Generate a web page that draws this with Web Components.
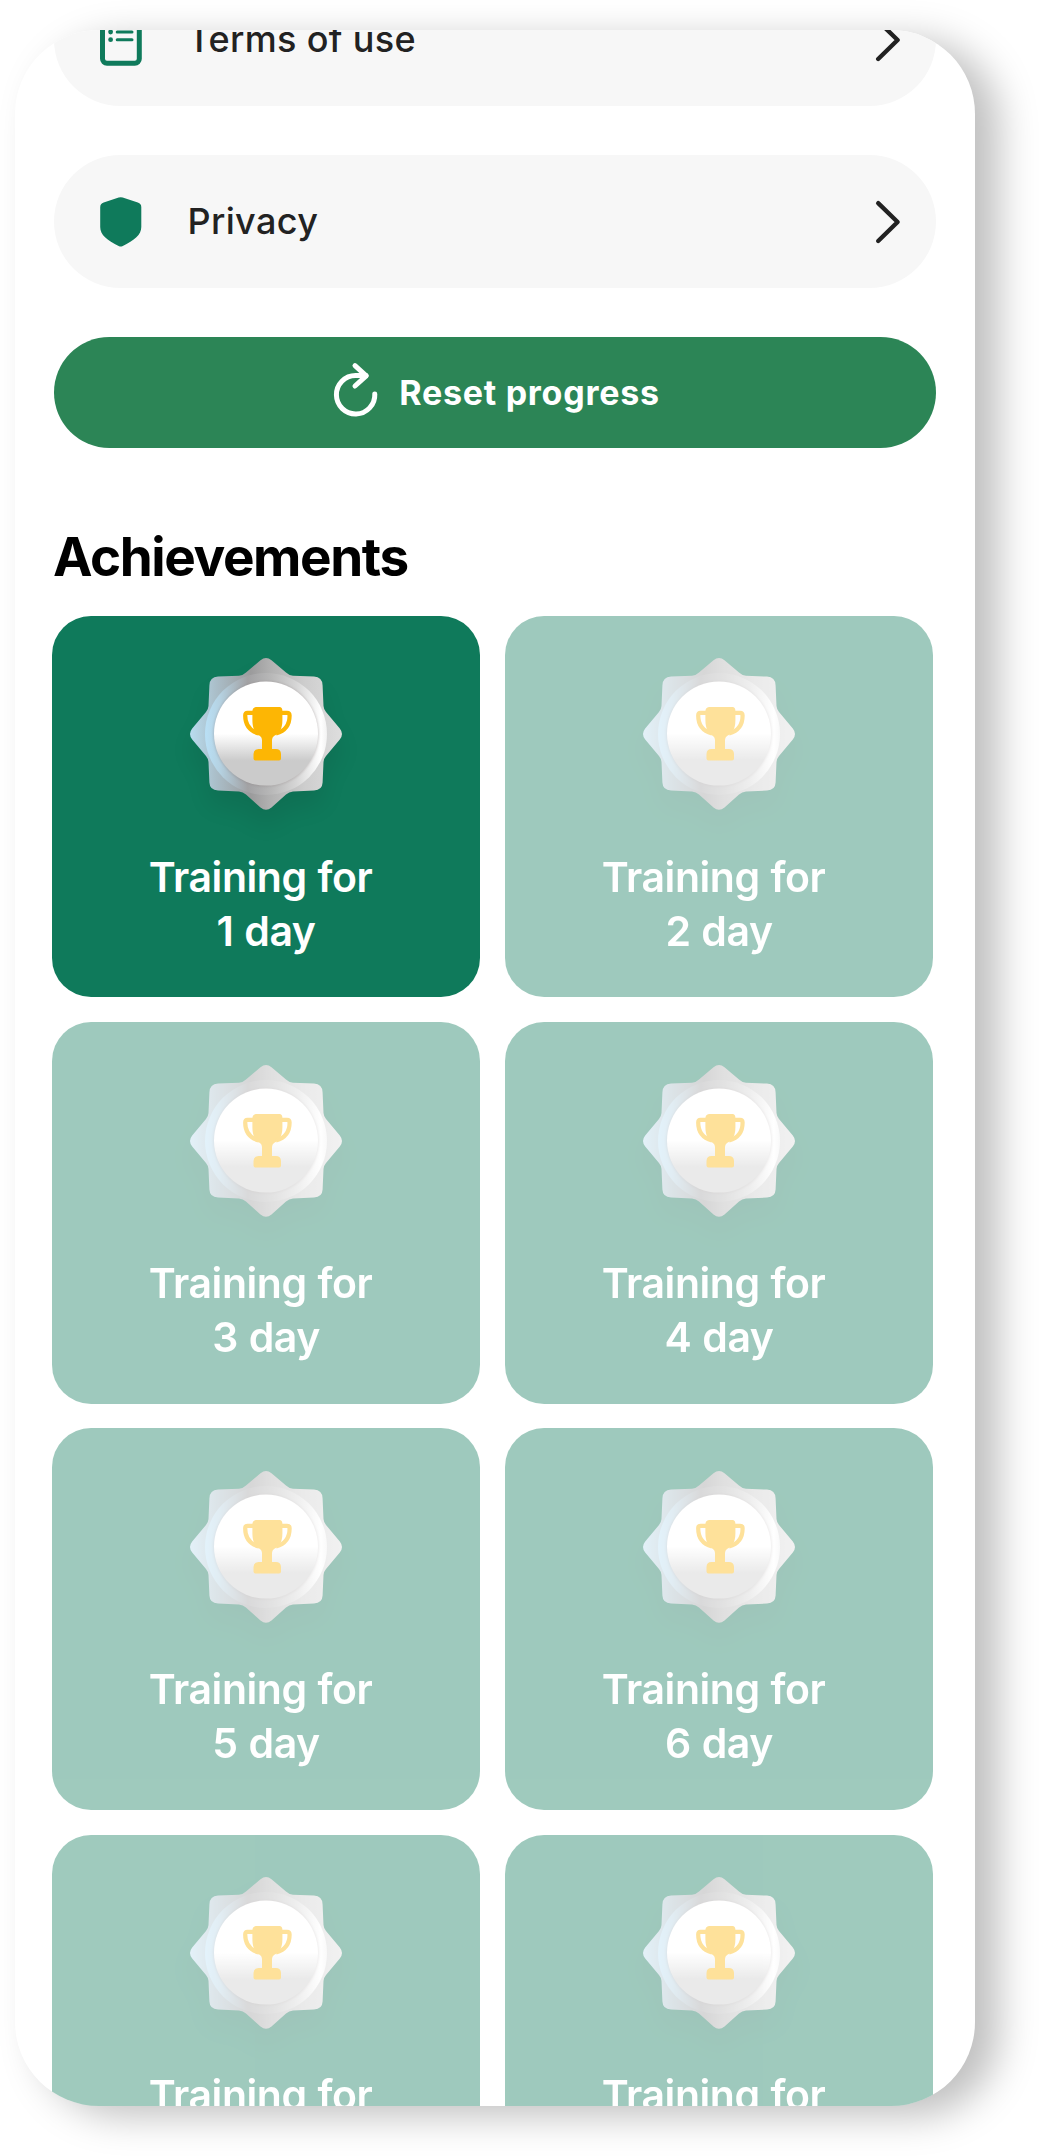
<!DOCTYPE html>
<html lang="en">
<head>
<meta charset="utf-8">
<title>Achievements</title>
<style>
html, body { margin: 0; height: 2156px; overflow: hidden; background: #fff; }
body { font-family: Inter, "Liberation Sans", sans-serif; }
</style>
</head>
<body>
<app-screen>
  <menu-row icon="terms">Terms of use</menu-row>
  <menu-row icon="shield">Privacy</menu-row>
  <reset-button>Reset progress</reset-button>
  <achievement-list heading="Achievements">
    <achievement-card days="1"></achievement-card>
    <achievement-card days="2" locked></achievement-card>
    <achievement-card days="3" locked></achievement-card>
    <achievement-card days="4" locked></achievement-card>
    <achievement-card days="5" locked></achievement-card>
    <achievement-card days="6" locked></achievement-card>
    <achievement-card days="7" locked></achievement-card>
    <achievement-card days="8" locked></achievement-card>
  </achievement-list>
</app-screen>
<script>
class Base extends HTMLElement {
  connectedCallback() {
    if (!this.shadowRoot) this.attachShadow({ mode: 'open' }).innerHTML = this.render();
  }
}

customElements.define('app-screen', class extends Base {
  render() {
    return `<style>
      :host { display: block; box-sizing: border-box; padding: 30px 65px 50px 15px; height: 2156px; }
      .panel { height: 2076px; border-radius: 84px; overflow: hidden; background: #fff;
        box-shadow: 24px 10px 38px rgba(0,0,0,.25); }
      .scroll { display: flex; flex-direction: column; gap: 49px; margin-top: -57px; padding: 0 39px; }
    </style><div class="panel"><div class="scroll"><slot></slot></div></div>`;
  }
});

const icons = {
  terms: `<g fill="none" stroke="#0f7a5b"><rect x="2.5" y="4.5" width="36.8" height="45.8" rx="4.5" stroke-width="5"/>
    <path d="M17.2 19H32M17.2 26.7H32" stroke-width="3" stroke-linecap="round"/></g>
    <g fill="#0f7a5b"><rect x="12" y="0" width="18" height="9" rx="3"/><circle cx="10.6" cy="19" r="2.4"/><circle cx="10.6" cy="26.7" r="2.4"/></g>`,
  shield: `<path fill="#0f7a5b" d="M18.7 2.6Q20.7 1.9 22.7 2.6L37.8 7.6Q41.3 8.8 41.3 12.2V32C41.3 40 34.5 45 22.3 51.2Q20.7 52 19.1 51.2C6.9 45 .2 40 .2 32V12.2Q.2 8.8 3.7 7.6Z"/>`
};

customElements.define('menu-row', class extends Base {
  render() {
    return `<style>
      :host { display: flex; align-items: center; box-sizing: border-box; height: 133px; padding: 0 35px 0 46px;
        border-radius: 66.5px; background: #f7f7f7; color: #222; font-size: 36px; font-weight: 500; letter-spacing: .35px; }
      .icon { width: 42px; height: 53px; margin-right: 45.5px; flex: none; }
      .label { flex: 1; line-height: 44px; padding-bottom: 2px; }
      .chev { width: 26px; height: 46px; flex: none; }
    </style>
    <svg class="icon" viewBox="0 0 42 53">${icons[this.getAttribute('icon')]}</svg>
    <span class="label"><slot></slot></span>
    <svg class="chev" viewBox="0 0 26 46"><path d="M3.2 4.2 22.6 23 3.2 42" fill="none" stroke="#222" stroke-width="4.4" stroke-linecap="round" stroke-linejoin="round"/></svg>`;
  }
});

customElements.define('reset-button', class extends Base {
  render() {
    return `<style>
      :host { display: flex; align-items: center; justify-content: center; gap: 21px; box-sizing: border-box; height: 110.7px; padding-left: 4px;
        border-radius: 55.4px; margin-top: .4px; background: #2c8556; color: #fff; font-size: 34px; font-weight: 700; letter-spacing: .74px; }
      svg { width: 44px; height: 54px; flex: none; overflow: visible; }
    </style>
    <svg viewBox="0 0 44 54"><g fill="none" stroke="#fff" stroke-width="5" stroke-linecap="round" stroke-linejoin="round">
      <path d="M40.8 28A19.2 19.2 0 1 1 21.6 9.6H32"/><path d="M21 -0.4 32.2 9.8 21 20"/></g></svg>
    <span><slot></slot></span>`;
  }
});

customElements.define('achievement-list', class extends Base {
  render() {
    return `<style>
      :host { display: block; margin: 27px 0 0 -2px; width: 881px; }
      h2 { margin: 0 0 26px 1px; font-size: 53px; line-height: 66px; font-weight: 700; letter-spacing: -1.4px; color: #000; }
      .grid { display: grid; grid-template-columns: 428px 428px; gap: 24.9px 25px; }
    </style><h2>${this.getAttribute('heading')}</h2><div class="grid"><slot></slot></div>`;
  }
});

customElements.define('medal-badge', class extends Base {
  render() {
    return `<style>
      :host { display: block; width: 152px; height: 152px; }
      svg { display: block; width: 152px; height: 152px; overflow: visible; }
    </style>
    <svg viewBox="-76 -76 152 152">
      <defs>
        <linearGradient id="s" gradientUnits="userSpaceOnUse" x1="-76" y1="0" x2="76" y2="0">
          <stop offset="0" stop-color="#b9dcef"/><stop offset=".16" stop-color="#abc0cb"/><stop offset=".4" stop-color="#9b9b9c"/>
          <stop offset=".52" stop-color="#b0b0b0"/><stop offset=".75" stop-color="#cdcdcd"/><stop offset="1" stop-color="#dedede"/>
        </linearGradient>
        <linearGradient id="r" gradientUnits="userSpaceOnUse" x1="-61" y1="0" x2="61" y2="0">
          <stop offset="0" stop-color="#b9e0f6"/><stop offset=".12" stop-color="#b5d2e2"/><stop offset=".35" stop-color="#a2a2a4"/>
          <stop offset=".55" stop-color="#b9b9b9"/><stop offset=".75" stop-color="#d6d6d6"/><stop offset=".95" stop-color="#fff"/><stop offset="1" stop-color="#f2f2f2"/>
        </linearGradient>
        <linearGradient id="d" x1="0" y1="0" x2="0" y2="1">
          <stop offset=".5" stop-color="#fff"/><stop offset=".76" stop-color="#cbcbcb"/><stop offset="1" stop-color="#cbcbcb"/>
        </linearGradient>
        <filter id="b" x="-50%" y="-50%" width="200%" height="200%"><feGaussianBlur stdDeviation="12"/></filter>
        <filter id="e" x="-20%" y="-20%" width="140%" height="140%"><feGaussianBlur stdDeviation="1"/></filter>
        <path id="p" d="M-5.5 -73.8Q0 -78.2 5.5 -73.8L20 -61.5Q23 -58.6 27 -58.3L48 -57.4Q56.3 -57 56.6 -48.5L57.5 -28Q57.8 -24.5 60 -22L73.8 -5.5Q78.2 0 73.8 5.5L60 22Q57.8 24.5 57.5 28L56.6 48.5Q56.3 56 48 56.6L27 57.5Q23 57.8 20 60.5L5.5 73.6Q0 78 -5.5 73.6L-20 60.5Q-23 57.8 -27 57.5L-48 56.6Q-56.3 56 -56.6 48.5L-57.5 28Q-57.8 24.5 -60 22L-73.8 5.5Q-78.2 0 -73.8 -5.5L-60 -22Q-57.8 -24.5 -57.5 -28L-56.6 -48.5Q-56.3 -57 -48 -57.4L-27 -58.3Q-23 -58.6 -20 -61.5Z"/>
      </defs>
      <use href="#p" y="16" fill="#000" opacity=".08" filter="url(#b)"/>
      <use href="#p" fill="url(#s)"/>
      <circle r="61" fill="url(#r)"/>
      <circle cy="-.2" r="52.8" fill="#8a7f7f" opacity=".32" filter="url(#e)"/>
      <circle cy="-.4" r="52" fill="url(#d)"/>
      <g fill="#fdb604">
        <path d="M-10 -27H14Q16.4 -26.6 16.4 -23V-14C16.4 -4 13 -.5 8 2Q6 3.4 6 6V15H-4V6Q-4 3.4 -6 2C-10 -.5 -13.6 -4 -13.6 -14V-23Q-13.4 -26.6 -10 -27Z"/>
        <path d="M-12.5 26.6V20Q-12.3 15 -7.5 15H9.8Q14.8 15 15 20V24.5Q15 26.6 13 26.6H-10.5Q-12.5 26.6 -12.5 24.5Z"/>
      </g>
      <path d="M-12 -21.2H-18.5Q-20.8 -21.2 -20.8 -18.5C-20.8 -9 -16 -3 -7 -.5M14.8 -21.2H21Q23.6 -21.2 23.6 -18.5C23.6 -9 19 -3 10 -.5" fill="none" stroke="#fdb604" stroke-width="4.2"/>
    </svg>`;
  }
});

customElements.define('achievement-card', class extends Base {
  render() {
    return `<style>
      :host { display: flex; flex-direction: column; align-items: center; gap: 39.2px; box-sizing: border-box; height: 381.3px;
        padding-top: 42.3px; border-radius: 39px; background: #0f7a5b; color: #fff; }
      :host([locked]) { opacity: .4; }
      .label { font-size: 41px; line-height: 54.5px; font-weight: 600; text-align: center; white-space: pre; letter-spacing: -.45px; word-spacing: 1px; }
    </style><medal-badge></medal-badge><div class="label">Training for \n${this.getAttribute('days')} day</div>`;
  }
});
</script>
</body>
</html>
